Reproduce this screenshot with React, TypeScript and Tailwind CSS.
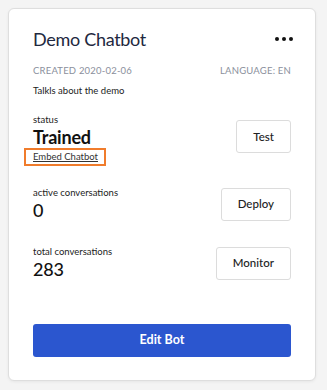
function Stat({
    label,
    value,
    bold,
    children,
}: {
    label: string
    value: string
    bold?: boolean
    children?: React.ReactNode
}) {
    return (
        <div className="flex flex-col">
            <span className="text-[9.5px] leading-3 text-[#222]">{label}</span>
            <span
                className={`text-[18px] leading-[22px] tracking-[-0.2px] text-[#111] ${bold ? 'font-bold' : 'font-medium'}`}
            >
                {value}
            </span>
            {children}
        </div>
    )
}

function ActionButton({ label, className = '' }: { label: string; className?: string }) {
    return (
        <button
            className={`h-[33px] rounded-[3px] border border-[#dcdcdc] bg-white px-4 text-[11.5px] font-medium text-[#222] ${className}`}
        >
            {label}
        </button>
    )
}

export default function App() {
    return (
        <div
            className="min-h-[390px] bg-[#f4f4f4] p-2"
            style={{ fontFamily: 'Lato, "Noto Sans", sans-serif' }}
        >
            <div className="flex h-[373px] w-[308px] flex-col rounded-md border border-[#dedede] bg-white px-6 pt-[18px] pb-[23px] shadow-[0_1px_3px_rgba(0,0,0,0.06)]">
                <div className="flex items-center justify-between">
                    <h1 className="text-[18px] leading-6 tracking-[-0.3px] text-[#1e2840]">
                        Demo Chatbot
                    </h1>
                    <button aria-label="more" className="-mr-[2px] flex gap-[3px]">
                        <span className="h-[4px] w-[4px] rounded-full bg-[#111]" />
                        <span className="h-[4px] w-[4px] rounded-full bg-[#111]" />
                        <span className="h-[4px] w-[4px] rounded-full bg-[#111]" />
                    </button>
                </div>

                <div className="mt-[14px] flex justify-between text-[9.5px] leading-3 tracking-[0.2px] text-[#8a8f9c]">
                    <span>CREATED 2020-02-06</span>
                    <span>LANGUAGE: EN</span>
                </div>

                <p className="mt-[8px] text-[9.5px] leading-3 text-[#222]">Talkls about the demo</p>

                <div className="mt-[17px] flex items-start justify-between">
                    <Stat label="status" value="Trained" bold>
                        <a
                            href="#"
                            className="-ml-[9px] w-fit border-2 border-[#f07c2c] pr-[6px] pl-[7px] text-[9.5px] leading-[14px] text-[#333] underline"
                        >
                            Embed Chatbot
                        </a>
                    </Stat>
                    <ActionButton label="Test" className="mt-[6px]" />
                </div>

                <div className="mt-[21px] flex items-center justify-between">
                    <Stat label="active conversations" value="0" />
                    <ActionButton label="Deploy" />
                </div>

                <div className="mt-[25px] flex items-center justify-between">
                    <Stat label="total conversations" value="283" />
                    <ActionButton label="Monitor" />
                </div>

                <button className="mt-auto h-[33px] w-full rounded-[3px] bg-[#2b56cf] text-[12.5px] font-bold text-white">
                    Edit Bot
                </button>
            </div>
        </div>
    )
}
